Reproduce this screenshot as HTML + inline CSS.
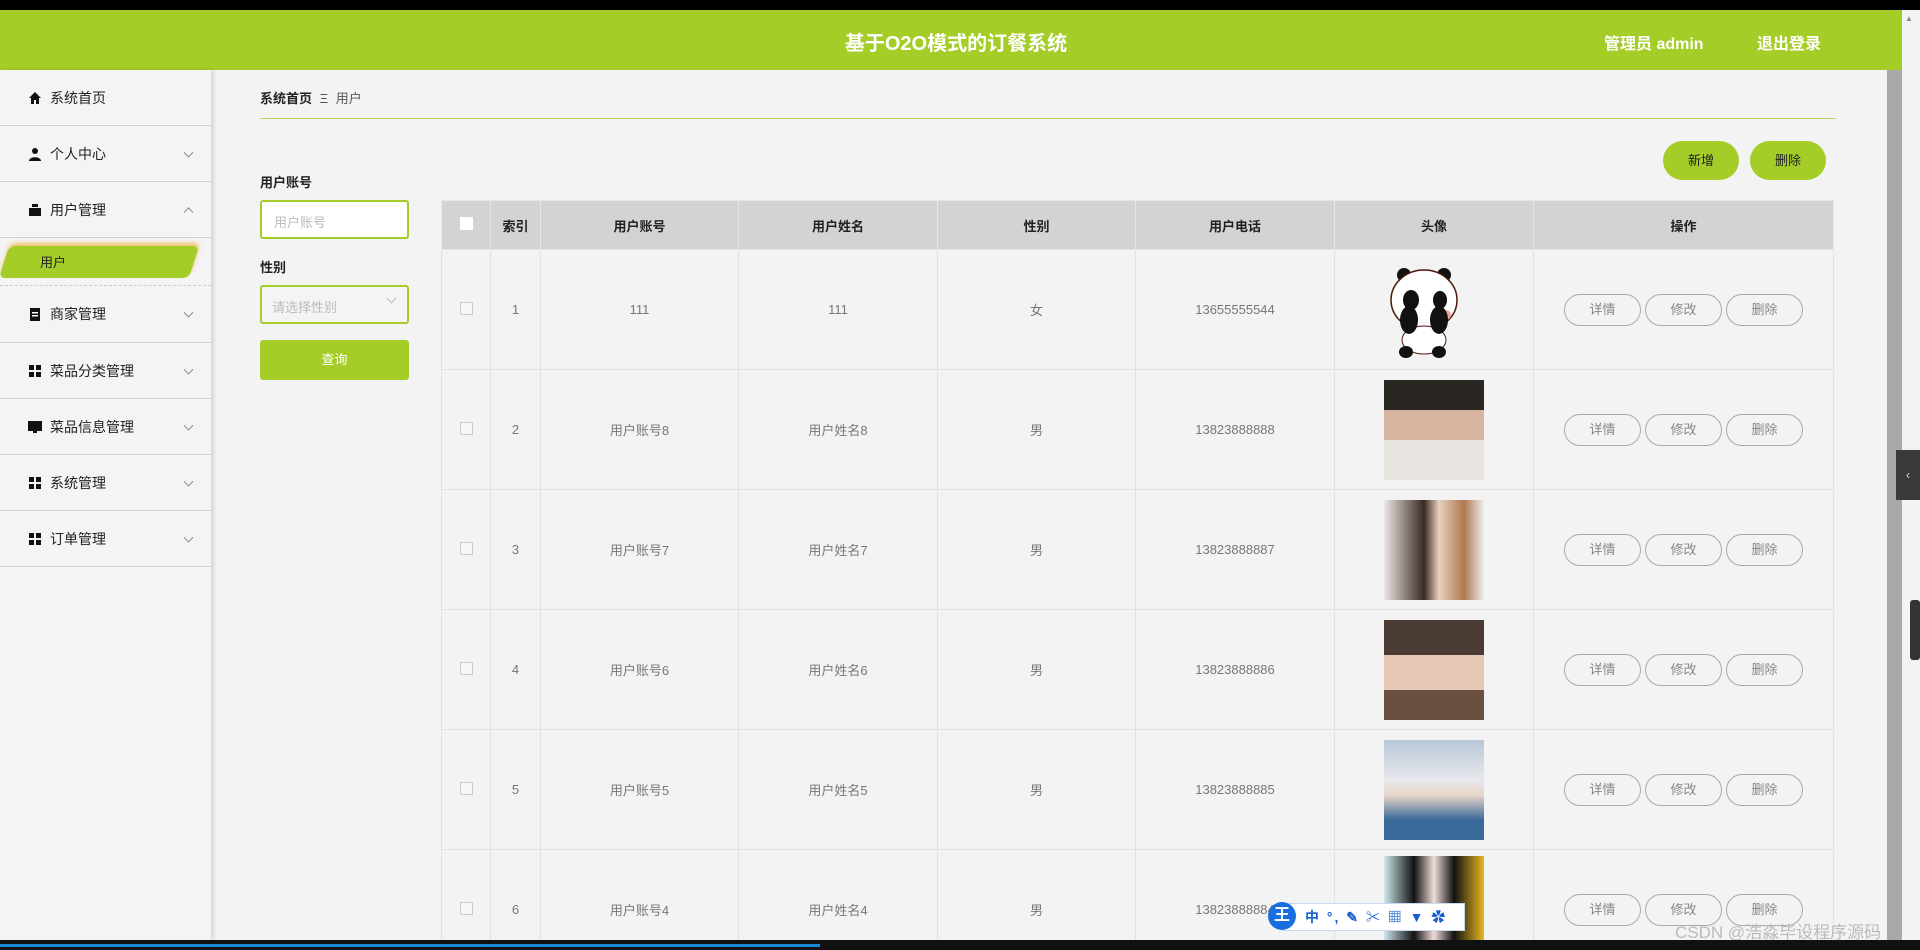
<!DOCTYPE html>
<html style="width:1920px;height:950px;overflow:hidden"><head><meta charset="utf-8"><style>
*{box-sizing:border-box;margin:0;padding:0}
body{width:1920px;height:950px;overflow:hidden;background:#f3f3f3;font-family:"Liberation Sans","Noto Sans CJK SC",sans-serif;position:relative;color:#333}
.abs{position:absolute}
#top{left:0;top:0;width:1920px;height:10px;background:#000}
#hdr{left:0;top:10px;width:1902px;height:60px;background:#a5cd28;color:#fff;font-weight:bold}
#side{left:0;top:70px;width:211px;height:870px;background:#f4f4f4;box-shadow:3px 0 4px rgba(0,0,0,.12)}
.mi{position:absolute;left:0;width:211px;border-bottom:1px solid #cfcfcf;font-size:14px;color:#222}
.mi .t{position:absolute;left:50px;top:50%;transform:translateY(-50%)}
.mi .ic{position:absolute;left:28px;top:50%;transform:translateY(-50%);width:14px;height:14px}
.mi .ar{position:absolute;left:185px;top:50%;width:7px;height:7px;border-right:1px solid #888;border-bottom:1px solid #888;transform:translateY(-70%) rotate(45deg)}
.ar.up{transform:translateY(-20%) rotate(225deg)!important}
.btn{position:absolute;border-radius:20px;background:#a5cd28;font-size:13px;color:#222;text-align:center}
#tw{position:absolute;left:0;top:0;width:1920px;height:940px;overflow:hidden}
table{position:absolute;left:441px;top:200px;border-collapse:collapse;font-size:13px;color:#777}
td,th{border:1px solid #e2e2e2;text-align:center;padding:0}
th{background:#d3d3d3;height:49px;color:#222;font-weight:bold;font-size:13px;border-color:#e6e6e6}
td{height:120px}
.cb{display:inline-block;width:13px;height:13px;border:1px solid #ccc;background:#f6f6f6}
.ob{display:inline-block;width:77px;height:32px;line-height:30px;border:1px solid #aaa;border-radius:16px;color:#888;margin:0 2px;font-size:13px}
.av{display:inline-block;width:100px;height:100px;vertical-align:middle}
</style></head><body>
<div id="top" class="abs"></div>
<div id="hdr" class="abs">
<div class="abs" style="left:0;width:1912px;top:17px;text-align:center;font-size:20px">基于O2O模式的订餐系统</div>
<div class="abs" style="left:1604px;top:20px;font-size:16px">管理员 admin</div>
<div class="abs" style="left:1757px;top:20px;font-size:16px">退出登录</div>
</div>
<div class="abs" style="left:1887px;top:70px;width:15px;height:870px;background:#a9a9a9"></div>
<div class="abs" style="left:1902px;top:10px;width:18px;height:930px;background:#f3f3f3"></div>
<div class="abs" style="left:1905px;top:14px;font-size:8px;color:#888">▲</div>
<div class="abs" style="left:1896px;top:450px;width:24px;height:50px;background:#3a3a3a;color:#ddd;font-size:12px;line-height:50px;text-align:center">‹</div>
<div class="abs" style="left:1910px;top:600px;width:10px;height:60px;background:#333;border-radius:3px"></div>

<div id="side" class="abs">
<div class="mi" style="top:0;height:56px"><svg class="ic" viewBox="0 0 14 14"><path d="M7 1L1 7h2v6h3V9h2v4h3V7h2z" fill="#111"/></svg><span class="t">系统首页</span></div>
<div class="mi" style="top:56px;height:56px"><svg class="ic" viewBox="0 0 14 14"><circle cx="7" cy="4" r="3" fill="#111"/><path d="M1 14c0-5 12-5 12 0z" fill="#111"/></svg><span class="t">个人中心</span><i class="ar"></i></div>
<div class="mi" style="top:112px;height:56px"><svg class="ic" viewBox="0 0 14 14"><rect x="4" y="1" width="6" height="3" fill="#111"/><rect x="1" y="5" width="12" height="8" fill="#111"/></svg><span class="t">用户管理</span><i class="ar up"></i></div>
<div class="mi" style="top:168px;height:48px;border-bottom:1px dashed #ccc">
<div class="abs" style="left:4px;top:8px;width:190px;height:32px;background:#a5cd28;transform:skewX(-18deg);border-radius:6px;box-shadow:0 -3px 4px #f0c070"></div>
<span class="abs" style="left:40px;top:14px;font-size:13px;color:#222">用户</span></div>
<div class="mi" style="top:216px;height:57px"><svg class="ic" viewBox="0 0 14 14"><rect x="2" y="1" width="10" height="13" fill="#111"/><rect x="4" y="5" width="6" height="1.5" fill="#fff"/><rect x="4" y="8" width="6" height="1.5" fill="#fff"/></svg><span class="t">商家管理</span><i class="ar"></i></div>
<div class="mi" style="top:273px;height:56px"><svg class="ic" viewBox="0 0 14 14"><rect x="1" y="1" width="5" height="5" fill="#111"/><rect x="8" y="1" width="5" height="5" fill="#111"/><rect x="1" y="8" width="5" height="5" fill="#111"/><rect x="8" y="8" width="5" height="5" fill="#111"/></svg><span class="t">菜品分类管理</span><i class="ar"></i></div>
<div class="mi" style="top:329px;height:56px"><svg class="ic" viewBox="0 0 14 14"><rect x="0" y="1" width="14" height="10" fill="#111"/><rect x="5" y="11" width="4" height="2" fill="#111"/></svg><span class="t">菜品信息管理</span><i class="ar"></i></div>
<div class="mi" style="top:385px;height:56px"><svg class="ic" viewBox="0 0 14 14"><rect x="1" y="1" width="5" height="5" fill="#111"/><rect x="8" y="1" width="5" height="5" fill="#111"/><rect x="1" y="8" width="5" height="5" fill="#111"/><rect x="8" y="8" width="5" height="5" fill="#111"/></svg><span class="t">系统管理</span><i class="ar"></i></div>
<div class="mi" style="top:441px;height:56px"><svg class="ic" viewBox="0 0 14 14"><rect x="1" y="1" width="5" height="5" fill="#111"/><rect x="8" y="1" width="5" height="5" fill="#111"/><rect x="1" y="8" width="5" height="5" fill="#111"/><rect x="8" y="8" width="5" height="5" fill="#111"/></svg><span class="t">订单管理</span><i class="ar"></i></div>
</div>

<div class="abs" style="left:260px;top:88px;font-size:13px"><b style="color:#222">系统首页</b> <span style="color:#555;margin:0 4px">Ξ</span> <span style="color:#555">用户</span></div>
<div class="abs" style="left:260px;top:118px;width:1576px;height:1px;background:#b8d25a"></div>
<div class="btn" style="left:1663px;top:141px;width:76px;height:39px;line-height:39px">新增</div>
<div class="btn" style="left:1750px;top:141px;width:76px;height:39px;line-height:39px">删除</div>

<div class="abs" style="left:260px;top:172px;font-size:13px;font-weight:bold;color:#222">用户账号</div>
<div class="abs" style="left:260px;top:200px;width:149px;height:39px;border:2px solid #a5cd28;border-radius:3px;background:#fff;font-size:13px;color:#bbb;padding:10px 12px">用户账号</div>
<div class="abs" style="left:260px;top:257px;font-size:13px;font-weight:bold;color:#222">性别</div>
<div class="abs" style="left:260px;top:285px;width:149px;height:39px;border:2px solid #a5cd28;border-radius:3px;background:#f4f4f4;font-size:13px;color:#bbb;padding:10px 10px">请选择性别<span style="position:absolute;right:12px;top:8px;width:7px;height:7px;border-right:1px solid #bbb;border-bottom:1px solid #bbb;transform:rotate(45deg)"></span></div>
<div class="abs" style="left:260px;top:340px;width:149px;height:40px;background:#a5cd28;border-radius:3px;color:#fff;font-size:13px;text-align:center;line-height:40px">查询</div>

<div id="tw">
<table>
<tr><th style="width:49px"><span class="cb" style="border-color:#fff;background:#fff"></span></th><th style="width:50px">索引</th><th style="width:198px">用户账号</th><th style="width:199px">用户姓名</th><th style="width:198px">性别</th><th style="width:199px">用户电话</th><th style="width:199px">头像</th><th style="width:300px">操作</th></tr>
<tr><td><span class="cb"></span></td><td>1</td><td>111</td><td>111</td><td>女</td><td>13655555544</td><td><svg class="av" viewBox="0 0 100 100"><circle cx="20" cy="15" r="7" fill="#111"/><circle cx="60" cy="15" r="7" fill="#111"/><ellipse cx="40" cy="40" rx="33" ry="30" fill="#fff" stroke="#4a1a0a" stroke-width="1.5"/><ellipse cx="27" cy="40" rx="8" ry="10" fill="#111"/><ellipse cx="56" cy="40" rx="7" ry="9" fill="#111"/><circle cx="62" cy="55" r="5" fill="#f4a0a0"/><ellipse cx="40" cy="80" rx="22" ry="14" fill="#fff" stroke="#4a1a0a"/><ellipse cx="25" cy="60" rx="9" ry="14" fill="#111"/><ellipse cx="55" cy="60" rx="9" ry="14" fill="#111"/><ellipse cx="22" cy="92" rx="7" ry="6" fill="#111"/><ellipse cx="55" cy="92" rx="7" ry="6" fill="#111"/></svg></td><td><span class="ob">详情</span><span class="ob">修改</span><span class="ob">删除</span></td></tr>
<tr><td><span class="cb"></span></td><td>2</td><td>用户账号8</td><td>用户姓名8</td><td>男</td><td>13823888888</td><td><span class="av" style="background:linear-gradient(#2a2622 0 30%,#d8b5a0 30% 60%,#e8e4e0 60%)"></span></td><td><span class="ob">详情</span><span class="ob">修改</span><span class="ob">删除</span></td></tr>
<tr><td><span class="cb"></span></td><td>3</td><td>用户账号7</td><td>用户姓名7</td><td>男</td><td>13823888887</td><td><span class="av" style="background:linear-gradient(90deg,#ece8e6,#3a2a22 40%,#e8d0c0 55%,#b07850 80%,#eee)"></span></td><td><span class="ob">详情</span><span class="ob">修改</span><span class="ob">删除</span></td></tr>
<tr><td><span class="cb"></span></td><td>4</td><td>用户账号6</td><td>用户姓名6</td><td>男</td><td>13823888886</td><td><span class="av" style="background:linear-gradient(#4a3a34 0 35%,#e6c8b4 35% 70%,#6a5040 70%)"></span></td><td><span class="ob">详情</span><span class="ob">修改</span><span class="ob">删除</span></td></tr>
<tr><td><span class="cb"></span></td><td>5</td><td>用户账号5</td><td>用户姓名5</td><td>男</td><td>13823888885</td><td><span class="av" style="background:linear-gradient(#b8c8d8,#e8e8ec 40%,#e8d6c8 55%,#3a6a9a 80%)"></span></td><td><span class="ob">详情</span><span class="ob">修改</span><span class="ob">删除</span></td></tr>
<tr><td><span class="cb"></span></td><td>6</td><td>用户账号4</td><td>用户姓名4</td><td>男</td><td>13823888884</td><td style="vertical-align:top;padding-top:6px"><span class="av" style="background:linear-gradient(90deg,#cfe8ee,#111 30%,#f0dcd8 50%,#111 70%,#e8b820)"></span></td><td><span class="ob">详情</span><span class="ob">修改</span><span class="ob">删除</span></td></tr>
</table>
</div>

<div class="abs" style="left:1282px;top:903px;width:183px;height:28px;background:#fff;border:1px solid #c8d8f0;color:#1a5fd0;font-size:14px;font-weight:bold;line-height:26px;padding-left:22px;white-space:nowrap;letter-spacing:2px;overflow:hidden">中 °, ✎ ✂ ▦ ▼ ✿</div>
<div class="abs" style="left:1268px;top:902px;width:28px;height:28px;border-radius:50%;background:#1a6fe0;color:#fff;font-weight:bold;font-size:16px;text-align:center;line-height:28px">王</div>
<div class="abs" style="left:1675px;top:918px;font-size:17px;color:#bbb;white-space:nowrap">CSDN @浩淼毕设程序源码</div>
<div class="abs" style="left:0;top:940px;width:1920px;height:10px;background:#111"></div>
<div class="abs" style="left:0;top:944px;width:820px;height:3px;background:#1a8ad8"></div>
</body></html>
